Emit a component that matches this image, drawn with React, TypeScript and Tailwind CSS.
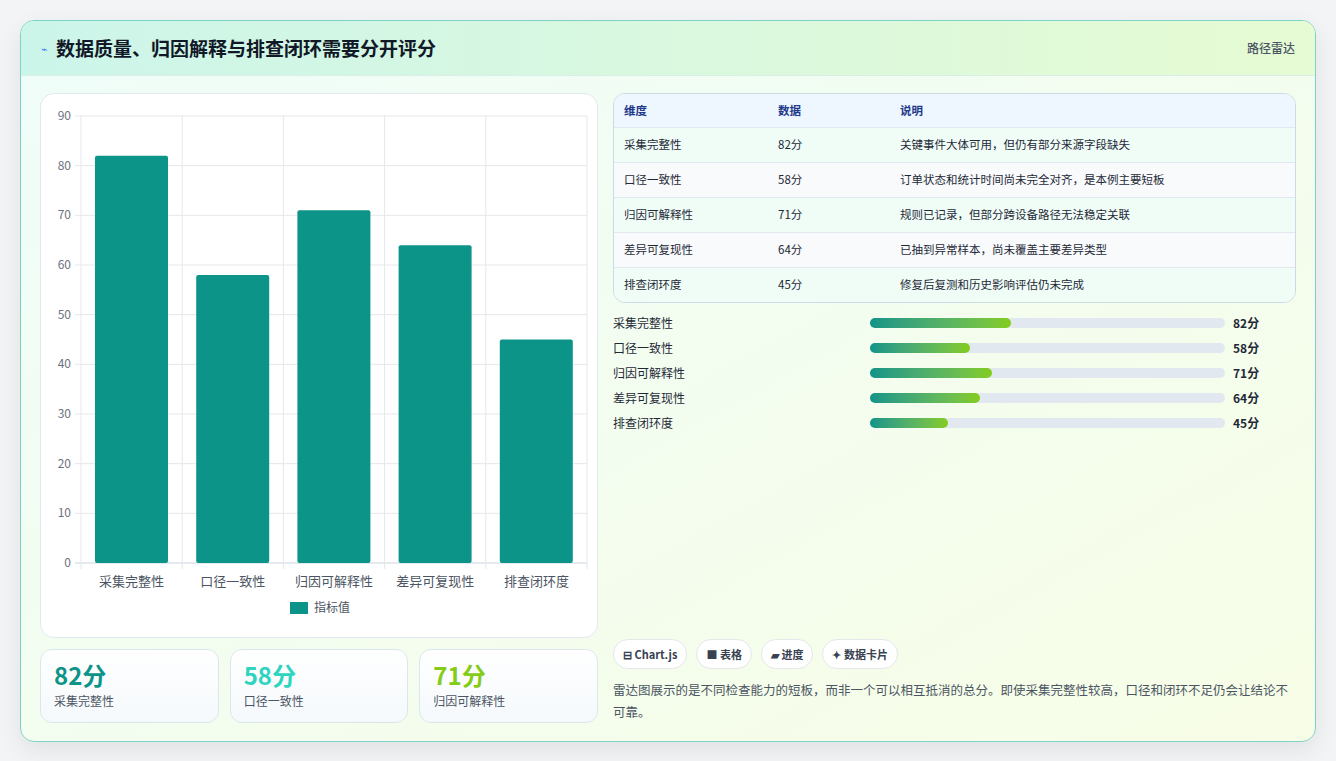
const font = { fontFamily: '"Noto Sans CJK SC", "Noto Sans", sans-serif' };

const items = [
	{ name: '采集完整性', value: 82, note: '关键事件大体可用，但仍有部分来源字段缺失' },
	{ name: '口径一致性', value: 58, note: '订单状态和统计时间尚未完全对齐，是本例主要短板' },
	{ name: '归因可解释性', value: 71, note: '规则已记录，但部分跨设备路径无法稳定关联' },
	{ name: '差异可复现性', value: 64, note: '已抽到异常样本，尚未覆盖主要差异类型' },
	{ name: '排查闭环度', value: 45, note: '修复后复测和历史影响评估仍未完成' },
];

function BarChart() {
	const W = 558;
	const H = 543;
	const x0 = 40;
	const x1 = 546;
	const y0 = 22;
	const y1 = 469;
	const step = (x1 - x0) / 5;
	const ticks = [0, 10, 20, 30, 40, 50, 60, 70, 80, 90];
	const yOf = (v: number) => y1 - ((y1 - y0) * v) / 90;
	return (
		<svg width={W} height={H} className="block">
			{ticks.map((t) => (
				<g key={t}>
					<line x1={x0 - 6} x2={x1} y1={yOf(t)} y2={yOf(t)} stroke={t === 0 ? '#cbd5e1' : '#e5e7eb'} />
					<text x={x0 - 10} y={yOf(t) + 4} fontSize="12" textAnchor="end" fill="#6b7280">{t}</text>
				</g>
			))}
			{[0, 1, 2, 3, 4, 5].map((i) => (
				<line key={i} x1={x0 + i * step} x2={x0 + i * step} y1={y0} y2={y1 + 6} stroke="#e5e7eb" />
			))}
			{items.map((it, i) => (
				<g key={it.name}>
					<rect x={x0 + i * step + 14} y={yOf(it.value)} width={73} height={y1 - yOf(it.value)} rx="2" fill="#0d9488" />
					<text x={x0 + i * step + step / 2} y={492} fontSize="13" textAnchor="middle" fill="#4b5563">{it.name}</text>
				</g>
			))}
			<rect x={249} y={508} width={18} height={12} fill="#0d9488" />
			<text x={273} y={518} fontSize="12" fill="#4b5563">指标值</text>
		</svg>
	);
}

export default function App() {
	return (
		<div className="min-h-[761px] bg-[#f3f4f6] p-5" style={font}>
			<div className="overflow-hidden rounded-[14px] border border-[#7dd3c8] bg-gradient-to-br from-[#effdf9] to-[#f7fde6] shadow-[0_8px_24px_rgba(0,0,0,0.08)]">
				<div className="flex h-[55px] items-center justify-between border-b border-[#d7efe6] bg-gradient-to-r from-[#ccf5ea] to-[#e6fbd3] px-5">
					<div className="flex items-center gap-2">
						<span className="text-[11px] text-[#3b82f6]">⌁</span>
						<h1 className="text-[19px] font-bold text-[#111827]">数据质量、归因解释与排查闭环需要分开评分</h1>
					</div>
					<span className="text-[12px] font-medium text-[#4b5563]">路径雷达</span>
				</div>
				<div className="flex gap-[15px] px-[19px] pt-[17px] pb-[18px]">
					<div className="flex w-[558px] flex-col gap-[11px]">
						<div className="rounded-[14px] border border-[#e2e8f0] bg-white">
							<BarChart />
						</div>
						<div className="grid grid-cols-3 gap-[11px]">
							{[
								['82分', '采集完整性', 'text-[#0d9488]'],
								['58分', '口径一致性', 'text-[#2dd4bf]'],
								['71分', '归因可解释性', 'text-[#84cc16]'],
							].map(([v, l, c]) => (
								<div key={l} className="h-[74px] rounded-[12px] border border-[#dbe7ef] bg-gradient-to-b from-white to-[#f5f9fc] px-[13px] pt-[10px]">
									<div className={`text-[24px] leading-[30px] font-bold ${c}`}>{v}</div>
									<div className="mt-[2px] text-[12px] text-[#4b5563]">{l}</div>
								</div>
							))}
						</div>
					</div>
					<div className="flex flex-1 flex-col">
						<div className="overflow-hidden rounded-[12px] border border-[#cbdbe5]">
							<table className="w-full text-left text-[11.5px] text-[#1f2937]">
								<thead>
									<tr className="h-[33px] bg-[#eef6ff] font-semibold text-[#1e3a8a]">
										<th className="w-[164px] pl-[10px] font-semibold">维度</th>
										<th className="w-[122px] font-semibold">数据</th>
										<th className="font-semibold">说明</th>
									</tr>
								</thead>
								<tbody>
									{items.map((it, i) => (
										<tr key={it.name} className={`h-[35px] border-t border-[#e2e8f0] ${i % 2 === 0 ? 'bg-[#f0fdf7]' : 'bg-[#f8fafc]'}`}>
											<td className="pl-[10px]">{it.name}</td>
											<td>{it.value}分</td>
											<td>{it.note}</td>
										</tr>
									))}
								</tbody>
							</table>
						</div>
						<div className="mt-[11px] flex flex-col gap-[7px]">
							{items.map((it) => (
								<div key={it.name} className="flex h-[18px] items-center text-[12px] text-[#1f2937]">
									<span className="w-[257px]">{it.name}</span>
									<div className="h-[10px] w-[355px] rounded-full bg-[#e2e8f0]">
										<div className="h-full rounded-full bg-gradient-to-r from-[#0d9488] to-[#84cc16]" style={{ width: `${it.value / 2.06}%` }} />
									</div>
									<span className="ml-[8px] font-bold">{it.value}分</span>
								</div>
							))}
						</div>
						<div className="mt-auto flex gap-[9px] text-[11px] font-semibold text-[#374151]">
							{['⊟ Chart.js', '■ 表格', '▰ 进度', '✦ 数据卡片'].map((c) => (
								<span key={c} className="rounded-full border border-[#e5e7eb] bg-white px-[9px] py-[6px]">{c}</span>
							))}
						</div>
						<p className="mt-[10px] text-[12.5px] leading-[22px] text-[#4b5563]">
							雷达图展示的是不同检查能力的短板，而非一个可以相互抵消的总分。即使采集完整性较高，口径和闭环不足仍会让结论不可靠。
						</p>
					</div>
				</div>
			</div>
		</div>
	);
}
